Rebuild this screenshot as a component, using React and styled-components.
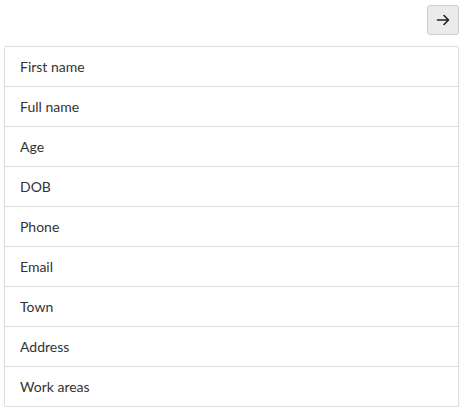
import { createGlobalStyle } from 'styled-components'
import styled from 'styled-components'

const GlobalStyle = createGlobalStyle`
  body {
    margin: 0;
    font-family: Lato, "Open Sans", sans-serif;
    font-size: 14px;
    color: #333;
    background: #fff;
  }
`

const fields = ['First name', 'Full name', 'Age', 'DOB', 'Phone', 'Email', 'Town', 'Address', 'Work areas']

export default function App() {
  return (
    <>
      <GlobalStyle />
      <Wrapper>
        <Toolbar>
          <ArrowButton type="button" aria-label="Next">
            <svg width="14" height="14" viewBox="0 0 14 14" fill="none" stroke="#222" strokeWidth="1.6" strokeLinecap="round" strokeLinejoin="round">
              <path d="M1.5 7h11M8 2.5 12.5 7 8 11.5" />
            </svg>
          </ArrowButton>
        </Toolbar>
        <FieldList>
          {fields.map((name) => (
            <FieldRow key={name}>{name}</FieldRow>
          ))}
        </FieldList>
      </Wrapper>
    </>
  )
}

// STYLES
const Wrapper = styled.div`
  width: 455px;
  padding: 5px 0 0 4px;
`

const Toolbar = styled.div`
  display: flex;
  justify-content: flex-end;
  margin-bottom: 11px;
`

const ArrowButton = styled.button`
  display: flex;
  align-items: center;
  justify-content: center;
  width: 32px;
  height: 30px;
  padding: 0;
  background: #ebebeb;
  border: 1px solid #ccc;
  border-radius: 3px;
  cursor: pointer;
`

const FieldList = styled.ul`
  list-style: none;
  margin: 0;
  padding: 0;
  border: 1px solid #ddd;
  border-radius: 2px;
  box-shadow: 0 1px 2px rgba(0, 0, 0, 0.08);
`

const FieldRow = styled.li`
  box-sizing: border-box;
  height: 40px;
  display: flex;
  align-items: center;
  padding: 0 15px 1px;
  border-bottom: 1px solid #ddd;
  &:last-child {
    height: 39px;
    border-bottom: none;
  }
`
